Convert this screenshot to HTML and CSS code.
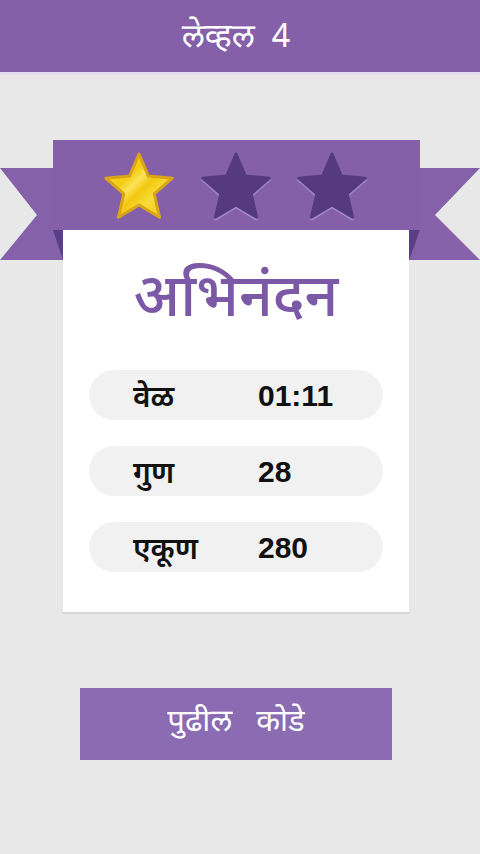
FILE: index.html
```html
<!DOCTYPE html>
<html lang="mr">
<head>
<meta charset="utf-8">
<link rel="stylesheet" href="styles.css">
</head>
<body>
<header class="topbar"><span class="topbar-title">लेव्हल&nbsp;&nbsp;4</span></header>
<main class="content">
  <svg class="ribbon" width="480" height="122" viewBox="0 0 480 122">
    <polygon class="tail" points="0,28 63,28 63,120 0,120 37,75"/>
    <polygon class="tail" points="409,28 480,28 435,75 480,120 409,120"/>
    <polygon class="fold" points="53,90 63,90 63,120"/>
    <polygon class="fold" points="420,90 409,90 409,120"/>
    <rect class="band" x="53" y="0" width="367" height="90"/>
    <defs>
      <linearGradient id="gold" x1="0" y1="0" x2="1" y2="1">
        <stop offset="0" stop-color="#fbe04a"/>
        <stop offset="0.35" stop-color="#f3cd12"/>
        <stop offset="0.45" stop-color="#fbe35a"/>
        <stop offset="0.55" stop-color="#f1c80f"/>
        <stop offset="0.7" stop-color="#f8dc3c"/>
        <stop offset="1" stop-color="#eec20c"/>
      </linearGradient>
      <polygon id="star" points="0,-35 9.4,-12.94 33.29,-10.82 15.22,4.94 20.57,28.32 0,16 -20.57,28.32 -15.22,4.94 -33.29,-10.82 -9.4,-12.94"/>
    </defs>
    <g transform="translate(139 49)">
      <use href="#star" class="star-gold"/>
    </g>
    <g transform="translate(236 49)">
      <use href="#star" class="star-glow" transform="translate(0 1.6)"/>
      <use href="#star" class="star-dark"/>
    </g>
    <g transform="translate(332 49)">
      <use href="#star" class="star-glow" transform="translate(0 1.6)"/>
      <use href="#star" class="star-dark"/>
    </g>
  </svg>
  <section class="card">
    <h1 class="card-title">अभिनंदन</h1>
    <div class="stats">
      <div class="stat"><span class="stat-label">वेळ</span><span class="stat-value">01:11</span></div>
      <div class="stat"><span class="stat-label">गुण</span><span class="stat-value">28</span></div>
      <div class="stat"><span class="stat-label">एकूण</span><span class="stat-value">280</span></div>
    </div>
  </section>
  <button class="next-btn">पुढील&nbsp;&nbsp;&nbsp;कोडे</button>
</main>
</body>
</html>
```
FILE: styles.css
```css
html, body {
  margin: 0;
  padding: 0;
}
body {
  width: 480px;
  height: 854px;
  overflow: hidden;
  background: #e8e8e8;
  font-family: "Noto Sans Devanagari", "Noto Sans", "Liberation Sans", sans-serif;
}
.topbar {
  height: 72px;
  background: #8560a9;
  border-bottom: 3px solid #e5deee;
  display: flex;
  align-items: center;
  justify-content: center;
  padding-right: 8px;
}
.topbar-title {
  color: #ffffff;
  font-size: 33px;
  line-height: 1;
  margin-top: 4px;
}
.content {
  display: flex;
  flex-direction: column;
  align-items: center;
  padding-top: 65px;
}
.ribbon {
  display: block;
  position: relative;
  z-index: 2;
}
.tail { fill: #8461a9; }
.fold { fill: #5a3e86; }
.band { fill: #8560a9; }
.star-gold {
  fill: url(#gold);
  stroke: #d9a516;
  stroke-width: 3;
  stroke-linejoin: round;
}
.star-dark {
  fill: #553a7e;
  stroke: #553a7e;
  stroke-width: 3;
  stroke-linejoin: round;
}
.star-glow {
  fill: #a48bcb;
  stroke: #a48bcb;
  stroke-width: 3;
  stroke-linejoin: round;
}
.card {
  width: 346px;
  height: 382px;
  margin-top: -32px;
  margin-right: 8px;
  background: #ffffff;
  box-shadow: 0 2px 1px rgba(0,0,0,0.08);
  box-sizing: border-box;
  padding-top: 34px;
  display: flex;
  flex-direction: column;
  align-items: center;
  position: relative;
  z-index: 1;
}
.card-title {
  margin: 0;
  color: #7c59a7;
  font-size: 59px;
  font-weight: 500;
  line-height: 76px;
}
.stats {
  margin-top: 30px;
  display: flex;
  flex-direction: column;
  gap: 26px;
}
.stat {
  width: 294px;
  height: 50px;
  border-radius: 25px;
  background: #f1f1f1;
  display: flex;
  align-items: center;
  box-sizing: border-box;
  padding-left: 44px;
}
.stat-label {
  width: 125px;
  font-size: 30px;
  font-weight: 600;
  color: #111111;
  line-height: 1;
  padding-top: 9px;
}
.stat-value {
  font-family: "Liberation Sans", Arial, sans-serif;
  font-size: 30px;
  font-weight: 700;
  color: #111111;
  line-height: 1;
  padding-top: 2px;
}
.next-btn {
  margin-top: 76px;
  margin-right: 8px;
  width: 312px;
  height: 72px;
  border: none;
  background: #8b6bb2;
  color: #ffffff;
  font-family: "Noto Sans Devanagari", "Noto Sans", sans-serif;
  font-size: 31px;
  padding: 0 0 2px;
}
```
